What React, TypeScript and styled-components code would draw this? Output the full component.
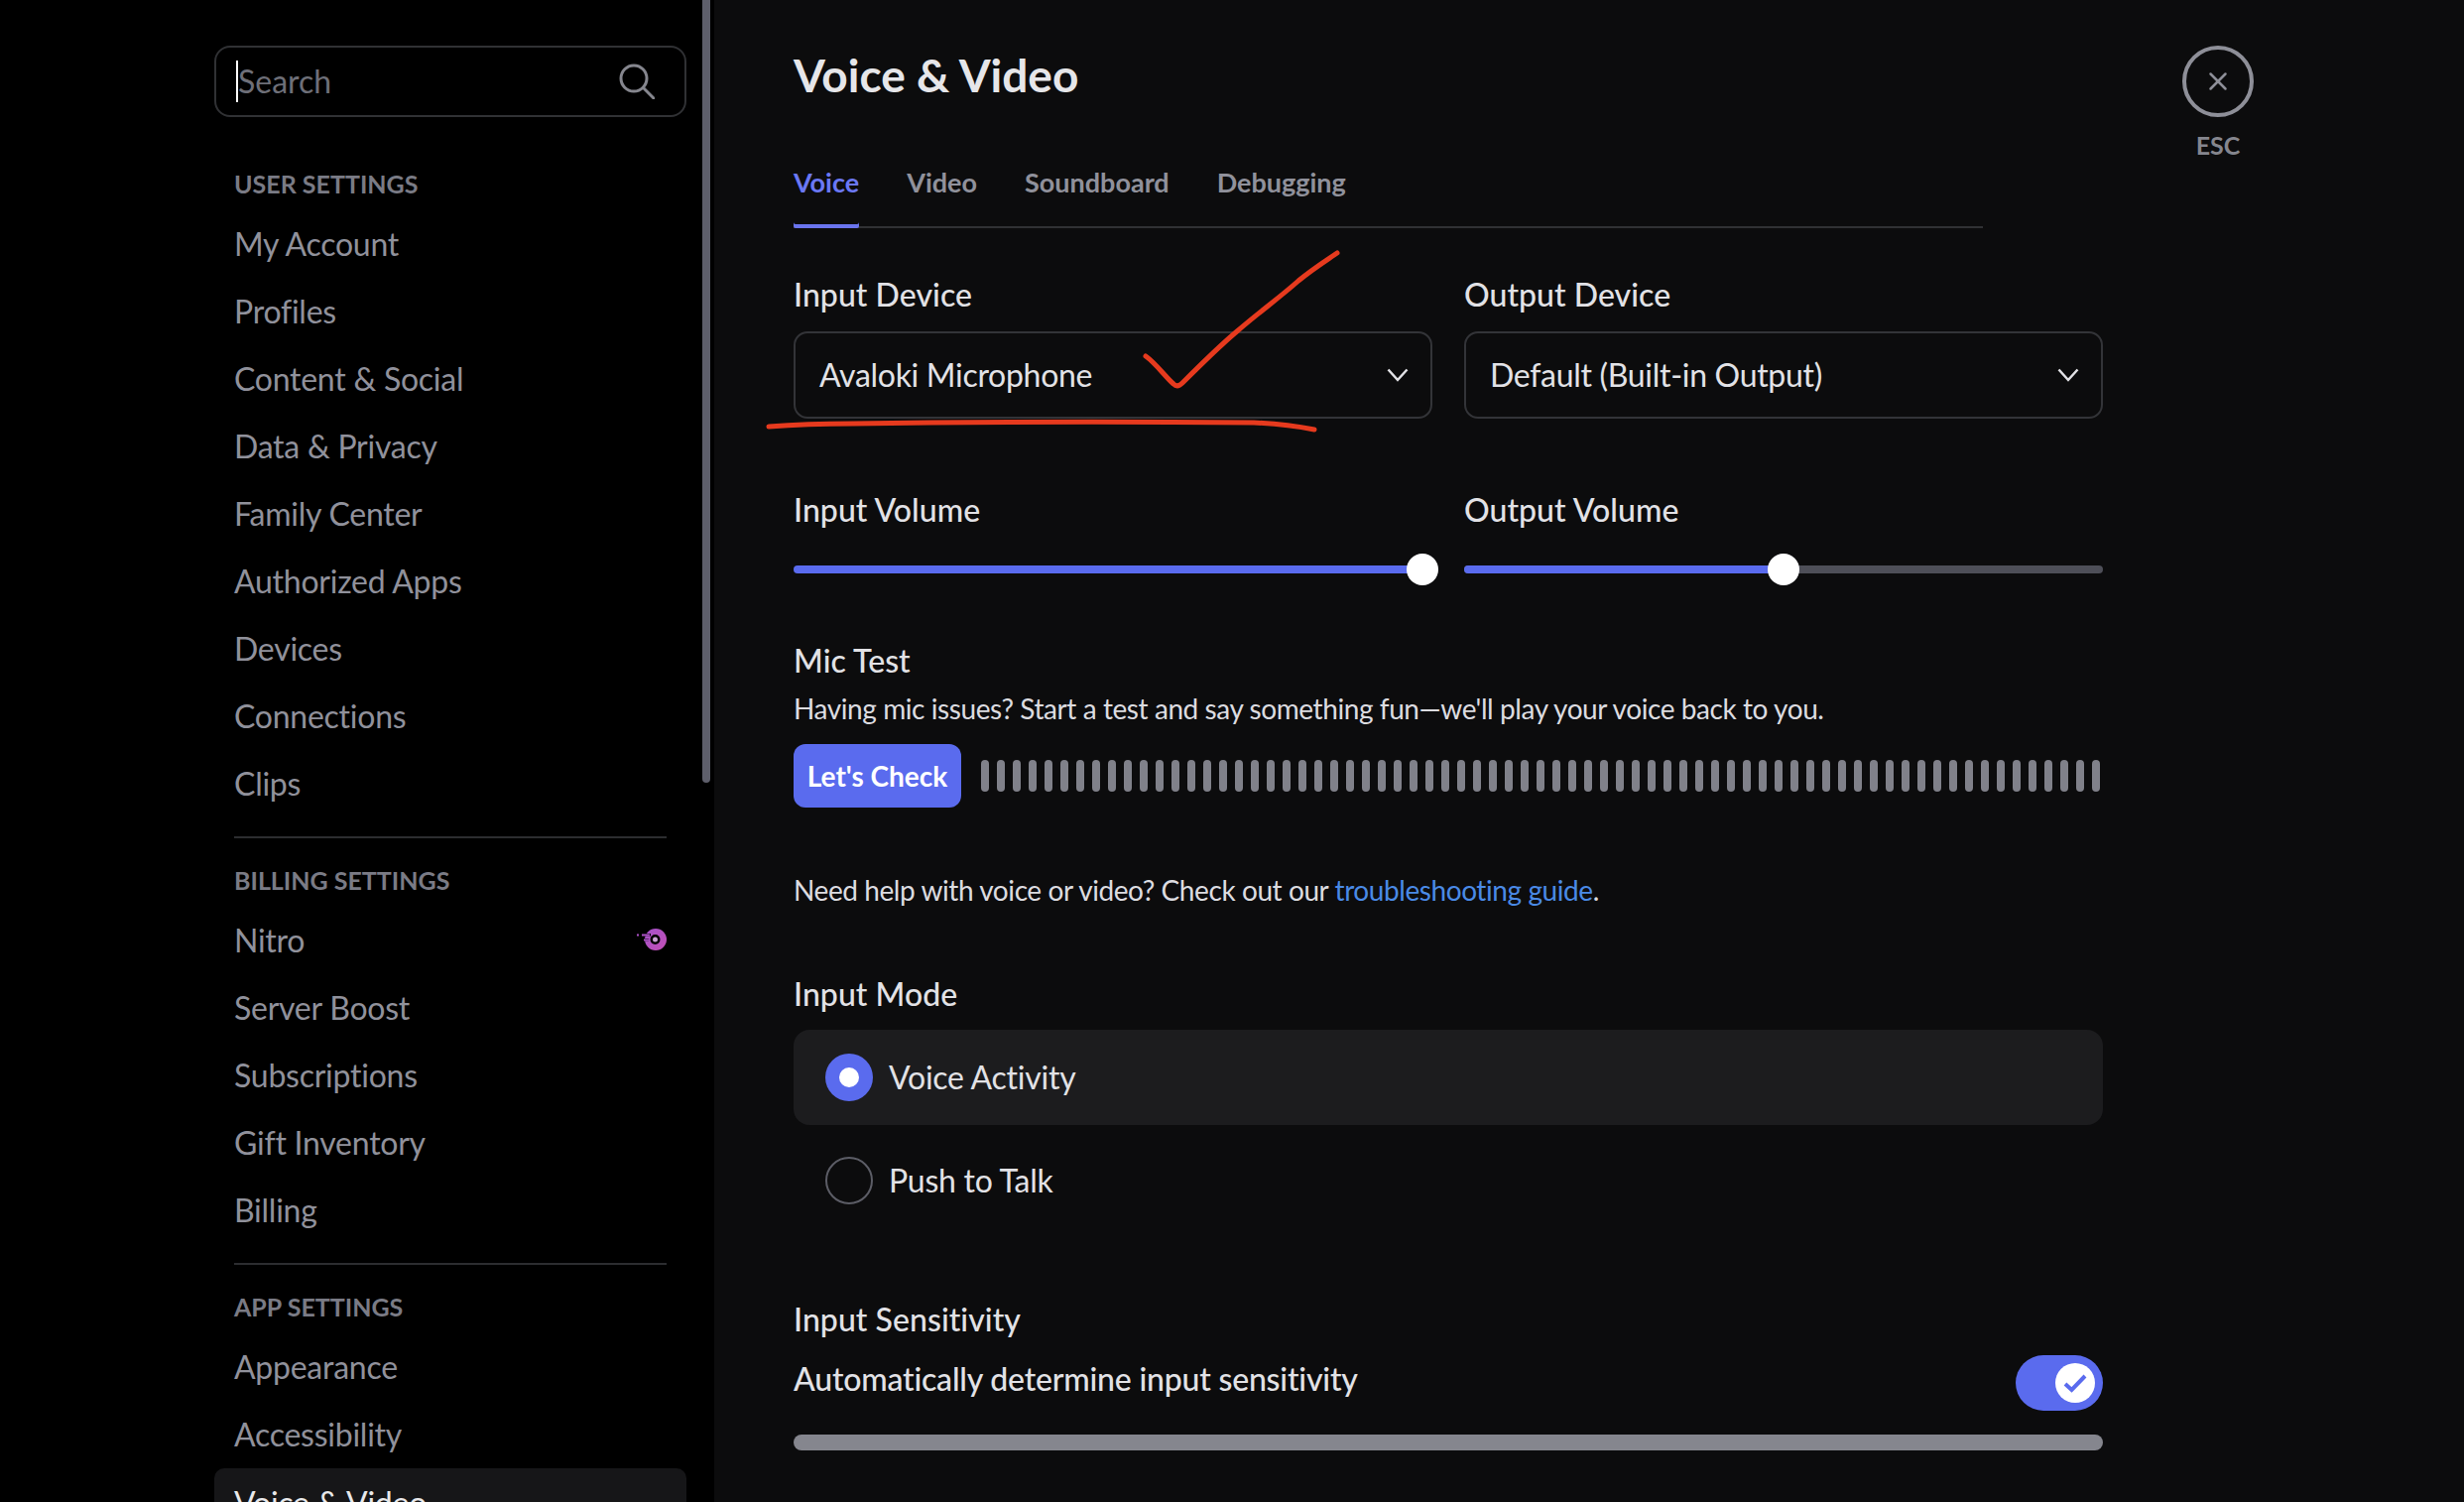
import React from 'react';
import styled, { createGlobalStyle } from 'styled-components';
import { X } from 'lucide-react';

const GlobalStyle = createGlobalStyle`
  html, body {
    margin: 0;
    padding: 0;
    background: #0c0c0d;
    font-family: Lato, "Noto Sans", "Liberation Sans", sans-serif;
  }
`;

const Page = styled.div`
  position: relative;
  display: flex;
  height: 100vh;
  overflow: hidden;
`;

const Sidebar = styled.aside`
  position: relative;
  width: 720px;
  flex-shrink: 0;
  background: #000;
  box-sizing: border-box;
  padding: 46px 28px 0 216px;
`;

const ScrollThumb = styled.div`
  position: absolute;
  top: -8px;
  left: 708px;
  width: 8px;
  height: 797px;
  border-radius: 4px;
  background: #5e5f6b;
`;

const SearchBox = styled.div`
  display: flex;
  align-items: center;
  justify-content: space-between;
  height: 72px;
  box-sizing: border-box;
  padding: 0 30px 0 20px;
  border: 2px solid #303134;
  border-radius: 16px;
  margin-bottom: 50px;
`;

const SearchText = styled.span`
  border-left: 2px solid #fff;
  height: 42px;
  line-height: 42px;
  font-size: 32px;
  color: #6e6f78;
`;

const SectionTitle = styled.div`
  height: 34px;
  line-height: 34px;
  margin-bottom: 9px;
  padding-left: 20px;
  font-size: 25px;
  font-weight: 700;
  color: #7a7b85;
`;

const NavItem = styled.div<{ $active?: boolean }>`
  display: flex;
  align-items: center;
  justify-content: space-between;
  height: 68px;
  margin-top: ${(p) => (p.$active ? '1px' : '0')};
  padding: 0 20px;
  border-radius: 10px;
  font-size: 32px;
  letter-spacing: -0.25px;
  color: ${(p) => (p.$active ? '#e8e8ea' : '#90919b')};
  background: ${(p) => (p.$active ? '#161618' : 'transparent')};
`;

const Divider = styled.div`
  height: 2px;
  margin: 20px 20px 25px;
  background: #2c2d30;
`;

const Main = styled.main`
  flex: 1;
  padding: 52px 0 0 80px;
  position: relative;
`;

const Title = styled.h1`
  margin: 0;
  height: 48px;
  line-height: 48px;
  font-size: 46px;
  font-weight: 700;
  color: #e6e6e9;
`;

const TabBar = styled.div`
  display: flex;
  gap: 48px;
  width: 1199px;
  height: 90px;
  box-sizing: border-box;
  margin-top: 40px;
  border-bottom: 2px solid #303134;
`;

const Tab = styled.div<{ $active?: boolean }>`
  height: 90px;
  line-height: 88px;
  margin-bottom: -2px;
  font-size: 27px;
  font-weight: 700;
  color: ${(p) => (p.$active ? '#6b78f5' : '#90919b')};
  box-shadow: ${(p) => (p.$active ? 'inset 0 -4px 0 #6a74ee' : 'none')};
  border-radius: 0 0 2px 2px;
`;

const Form = styled.div`
  width: 1320px;
`;

const Columns = styled.div<{ $top: number }>`
  display: grid;
  grid-template-columns: 644px 644px;
  column-gap: 32px;
  margin-top: ${(p) => p.$top}px;
`;

const Label = styled.div<{ $top?: number }>`
  height: 40px;
  line-height: 38px;
  margin-top: ${(p) => p.$top ?? 0}px;
  font-size: 32px;
  font-weight: 500;
  letter-spacing: 0.05px;
  color: #e2e2e6;
`;

const Select = styled.div`
  display: flex;
  align-items: center;
  justify-content: space-between;
  height: 88px;
  box-sizing: border-box;
  margin-top: 16px;
  padding: 0 22px 0 24px;
  border: 2px solid #333438;
  border-radius: 14px;
  font-size: 32px;
  line-height: 38px;
  letter-spacing: -0.3px;
  color: #e2e2e6;
`;

const Slider = styled.div`
  position: relative;
  height: 32px;
  margin-top: 23px;
  display: flex;
  align-items: center;
`;

const Track = styled.div`
  width: 100%;
  height: 8px;
  border-radius: 4px;
  background: #4e4f58;
  overflow: hidden;
`;

const TrackFill = styled.div`
  height: 100%;
  background: #5a6bee;
`;

const Thumb = styled.div`
  position: absolute;
  top: 0;
  width: 32px;
  height: 32px;
  margin-left: -16px;
  border-radius: 50%;
  background: #fff;
`;

const BodyText = styled.div<{ $top: number }>`
  height: 40px;
  line-height: 39px;
  margin-top: ${(p) => p.$top}px;
  font-size: 28px;
  letter-spacing: -0.42px;
  color: #dcdce0;
`;

const Link = styled.span`
  color: #4a8ae6;
`;

const MicRow = styled.div`
  display: flex;
  align-items: center;
  gap: 20px;
  margin-top: 15px;
`;

const CheckButton = styled.div`
  width: 169px;
  height: 64px;
  line-height: 64px;
  text-align: center;
  border-radius: 12px;
  background: #5a6bee;
  color: #fff;
  font-size: 28px;
  font-weight: 700;
`;

const Bars = styled.div`
  display: flex;
  gap: 8px;
`;

const Bar = styled.div`
  width: 8px;
  height: 32px;
  border-radius: 4px;
  background: #80818a;
`;

const RadioList = styled.div`
  display: flex;
  flex-direction: column;
  gap: 8px;
  margin-top: 15px;
`;

const RadioRow = styled.div<{ $selected?: boolean }>`
  display: flex;
  align-items: center;
  gap: 16px;
  height: 96px;
  padding-left: 32px;
  border-radius: 16px;
  font-size: 32px;
  line-height: 38px;
  letter-spacing: -0.25px;
  color: #e2e2e6;
  background: ${(p) => (p.$selected ? '#1c1c1e' : 'transparent')};
`;

const RadioDot = styled.div<{ $selected?: boolean }>`
  display: flex;
  align-items: center;
  justify-content: center;
  width: 48px;
  height: 48px;
  box-sizing: border-box;
  border-radius: 50%;
  background: ${(p) => (p.$selected ? '#5a6bee' : 'transparent')};
  border: ${(p) => (p.$selected ? 'none' : '2px solid #5c5d66')};
  &::after {
    content: '';
    display: ${(p) => (p.$selected ? 'block' : 'none')};
    width: 20px;
    height: 20px;
    border-radius: 50%;
    background: #fff;
  }
`;

const SensitivityRow = styled.div`
  display: flex;
  justify-content: space-between;
  margin-top: 15px;
  height: 56px;
`;

const SensitivityText = styled.div`
  height: 50px;
  line-height: 48px;
  font-size: 32px;
  font-weight: 500;
  letter-spacing: -0.2px;
  color: #e2e2e6;
`;

const Toggle = styled.div`
  display: flex;
  align-items: center;
  justify-content: flex-end;
  width: 88px;
  height: 56px;
  box-sizing: border-box;
  padding-right: 8px;
  border-radius: 28px;
  background: #5a6bee;
`;

const ToggleKnob = styled.div`
  display: flex;
  align-items: center;
  justify-content: center;
  width: 40px;
  height: 40px;
  border-radius: 50%;
  background: #fff;
`;

const SensitivityBar = styled.div`
  height: 16px;
  margin-top: 24px;
  border-radius: 8px;
  background: #85868e;
`;

const CloseBlock = styled.div`
  position: absolute;
  top: 46px;
  left: 1480px;
  display: flex;
  flex-direction: column;
  align-items: center;
  width: 72px;
`;

const CloseCircle = styled.div`
  display: flex;
  align-items: center;
  justify-content: center;
  width: 72px;
  height: 72px;
  box-sizing: border-box;
  border: 4px solid #8e8f98;
  border-radius: 50%;
  color: #8e8f98;
`;

const CloseLabel = styled.div`
  margin-top: 14px;
  line-height: 28px;
  font-size: 25px;
  font-weight: 700;
  color: #85868e;
`;

const Annotation = styled.svg`
  position: absolute;
  top: 0;
  left: 0;
  pointer-events: none;
`;

const Chevron = () => (
  <svg width="22" height="14" viewBox="0 0 22 14" fill="none">
    <path d="M1.5 1.5 L11 12 L20.5 1.5" stroke="#e2e2e6" strokeWidth="2.5" />
  </svg>
);

const SearchIcon = () => (
  <svg width="36" height="36" viewBox="0 0 36 36" fill="none" stroke="#85868e" strokeWidth="3">
    <circle cx="15" cy="15" r="13" />
    <path d="M24.5 24.5 L35 35" strokeLinecap="round" />
  </svg>
);

const NitroIcon = () => (
  <svg width="30" height="22" viewBox="0 0 30 22">
    <defs>
      <linearGradient id="nitro" x1="0" y1="0" x2="1" y2="1">
        <stop offset="0" stopColor="#a552cc" />
        <stop offset="1" stopColor="#c24fb4" />
      </linearGradient>
    </defs>
    <circle cx="19" cy="11" r="11" fill="url(#nitro)" />
    <circle cx="18.5" cy="11" r="5" fill="#000" />
    <circle cx="18.5" cy="11" r="2.5" fill="#c9a3d4" />
    <path d="M3 5h11v2.5H3zM5 10h7v2.5H5z" fill="#000" />
    <path d="M0 5.5h2v2H0zM5 5.5h8v2H5zM7 10.5h5v2H7z" fill="#ad52c8" />
  </svg>
);

const userItems = ['My Account', 'Profiles', 'Content & Social', 'Data & Privacy', 'Family Center', 'Authorized Apps', 'Devices', 'Connections', 'Clips'];
const billingItems = ['Server Boost', 'Subscriptions', 'Gift Inventory', 'Billing'];

export default function App() {
  return (
    <Page>
      <GlobalStyle />
      <Sidebar>
        <ScrollThumb />
        <SearchBox>
          <SearchText>Search</SearchText>
          <SearchIcon />
        </SearchBox>
        <SectionTitle>USER SETTINGS</SectionTitle>
        {userItems.map((item) => (
          <NavItem key={item}>{item}</NavItem>
        ))}
        <Divider />
        <SectionTitle>BILLING SETTINGS</SectionTitle>
        <NavItem>
          Nitro
          <NitroIcon />
        </NavItem>
        {billingItems.map((item) => (
          <NavItem key={item}>{item}</NavItem>
        ))}
        <Divider />
        <SectionTitle>APP SETTINGS</SectionTitle>
        <NavItem>Appearance</NavItem>
        <NavItem>Accessibility</NavItem>
        <NavItem $active>Voice &amp; Video</NavItem>
      </Sidebar>
      <Main>
        <Title>Voice &amp; Video</Title>
        <TabBar>
          <Tab $active>Voice</Tab>
          <Tab>Video</Tab>
          <Tab>Soundboard</Tab>
          <Tab>Debugging</Tab>
        </TabBar>
        <Form>
          <Columns $top={48}>
            <div>
              <Label>Input Device</Label>
              <Select>
                Avaloki Microphone
                <Chevron />
              </Select>
            </div>
            <div>
              <Label>Output Device</Label>
              <Select>
                Default (Built-in Output)
                <Chevron />
              </Select>
            </div>
          </Columns>
          <Columns $top={73}>
            <div>
              <Label>Input Volume</Label>
              <Slider>
                <Track>
                  <TrackFill style={{ width: '100%' }} />
                </Track>
                <Thumb style={{ left: '98.5%' }} />
              </Slider>
            </div>
            <div>
              <Label>Output Volume</Label>
              <Slider>
                <Track>
                  <TrackFill style={{ width: '50%' }} />
                </Track>
                <Thumb style={{ left: '50%' }} />
              </Slider>
            </div>
          </Columns>
          <Label $top={57}>Mic Test</Label>
          <BodyText $top={8}>Having mic issues? Start a test and say something fun—we'll play your voice back to you.</BodyText>
          <MicRow>
            <CheckButton>Let's Check</CheckButton>
            <Bars>
              {Array.from({ length: 71 }, (_, i) => (
                <Bar key={i} />
              ))}
            </Bars>
          </MicRow>
          <BodyText $top={64}>
            Need help with voice or video? Check out our <Link>troubleshooting guide</Link>.
          </BodyText>
          <Label $top={65}>Input Mode</Label>
          <RadioList>
            <RadioRow $selected>
              <RadioDot $selected />
              Voice Activity
            </RadioRow>
            <RadioRow>
              <RadioDot />
              Push to Talk
            </RadioRow>
          </RadioList>
          <Label $top={73}>Input Sensitivity</Label>
          <SensitivityRow>
            <SensitivityText>Automatically determine input sensitivity</SensitivityText>
            <Toggle>
              <ToggleKnob>
                <svg width="24" height="20" viewBox="0 0 24 20" fill="none">
                  <path d="M2 11 L8.5 17 L22 3" stroke="#5a6bee" strokeWidth="4" />
                </svg>
              </ToggleKnob>
            </Toggle>
          </SensitivityRow>
          <SensitivityBar />
        </Form>
        <CloseBlock>
          <CloseCircle>
            <X size={30} strokeWidth={2} />
          </CloseCircle>
          <CloseLabel>ESC</CloseLabel>
        </CloseBlock>
      </Main>
      <Annotation width="2484" height="1514" viewBox="0 0 2484 1514" fill="none">
        <path
          d="M1155 359 C1165 366 1175 380 1183 387 C1186 390 1189 389 1192 386 C1210 368 1228 350 1247 334 C1270 314 1290 300 1309 283 C1325 270 1338 262 1348 255"
          stroke="#e63a1e"
          strokeWidth="5"
          strokeLinecap="round"
        />
        <path
          d="M775 430 C800 428 830 427 860 427 C1000 425 1130 425 1264 426 C1290 427 1310 430 1325 433"
          stroke="#e63a1e"
          strokeWidth="5"
          strokeLinecap="round"
        />
      </Annotation>
    </Page>
  );
}
